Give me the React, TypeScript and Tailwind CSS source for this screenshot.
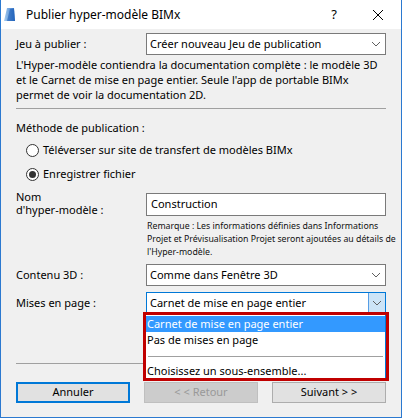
import React from "react";

const F = { fontFamily: '"Noto Sans", "Open Sans", sans-serif' };

function Chevron() {
  return (
    <svg width="10" height="6" viewBox="0 0 10 6" className="block">
      <path d="M1 1 L5 5 L9 1" fill="none" stroke="#606060" strokeWidth="1" />
    </svg>
  );
}

function Select({ text, focused }: { text: string; focused?: boolean }) {
  return (
    <div
      className={`relative flex h-[22px] w-[240px] shrink-0 items-center bg-white border ${
        focused ? "border-[#0078d7]" : "border-[#7a7a7a]"
      }`}
    >
      <span className="pl-[3px] text-[11px] text-black whitespace-nowrap">{text}</span>
      {focused ? (
        <div className="ml-auto flex h-full w-[17px] items-center justify-center border-l border-[#569de5] bg-[#cce4f7]">
          <Chevron />
        </div>
      ) : (
        <div className="ml-auto mr-[4px] flex items-center">
          <Chevron />
        </div>
      )}
    </div>
  );
}

function Radio({ checked, label }: { checked?: boolean; label: string }) {
  return (
    <div className="flex h-[24px] items-center pl-[10px]">
      <div className="flex h-[13px] w-[13px] shrink-0 items-center justify-center rounded-full border border-[#333] bg-white">
        {checked && <div className="h-[7px] w-[7px] rounded-full bg-[#333]" />}
      </div>
      <span className="ml-[4px] whitespace-nowrap text-[11px] text-black">{label}</span>
    </div>
  );
}

export default function App() {
  return (
    <div className="h-[420px] w-[402px] overflow-hidden bg-white" style={F}>
      <div className="relative flex h-[418px] w-[402px] flex-col border-x border-b border-[#2b79d0] bg-[#f0f0f0]">
        {/* Title bar */}
        <div className="flex h-[29px] shrink-0 items-center bg-white">
          <svg width="12" height="15" viewBox="0 0 12 15" className="ml-[3px]">
            <defs>
              <linearGradient id="g" x1="0" y1="0" x2="1" y2="0">
                <stop offset="0" stopColor="#a9cff2" />
                <stop offset="1" stopColor="#2a6cc4" />
              </linearGradient>
            </defs>
            <path d="M3 1 L10 1 L11 14 L0 14 Z" fill="url(#g)" />
            <path d="M6 2 L10 2 L11 14 L3 14 Z" fill="#1e5fb8" opacity="0.6" />
          </svg>
          <span className="ml-[10px] whitespace-nowrap text-[12px] text-black">Publier hyper-modèle BIMx</span>
          <span className="ml-auto mr-[35px] text-[13px] text-black">?</span>
          <svg width="12" height="12" viewBox="0 0 12 12" className="mr-[17px]">
            <path d="M1 1 L11 11 M11 1 L1 11" stroke="#000" strokeWidth="1" />
          </svg>
        </div>

        {/* Content */}
        <div className="flex shrink-0 flex-col px-[15px] text-[11px] text-black">
          <div className="mt-[4px] flex h-[22px] items-center">
            <span className="w-[130px] shrink-0">Jeu à publier :</span>
            <Select text="Créer nouveau Jeu de publication" />
          </div>

          <p className="mt-[2px] whitespace-nowrap leading-[15px]">
            L'Hyper-modèle contiendra la documentation complète : le modèle 3D
            <br />
            et le Carnet de mise en page entier. Seule l'app de portable BIMx
            <br />
            permet de voir la documentation 2D.
          </p>

          <div className="mt-[6px] h-px bg-[#a0a0a0]" />

          <div className="mt-[11px] leading-[15px]">Méthode de publication :</div>

          <div className="mt-[3px]">
            <Radio label="Téléverser sur site de transfert de modèles BIMx" />
            <Radio checked label="Enregistrer fichier" />
          </div>

          <div className="mt-[4px] flex items-start">
            <div className="w-[130px] shrink-0 leading-[13px]">
              Nom
              <br />
              d'hyper-modèle :
            </div>
            <div className="mt-[3px] flex h-[23px] w-[240px] shrink-0 items-center border border-[#7a7a7a] bg-white pl-[4px]">
              Construction
            </div>
          </div>

          <p className="ml-[131px] mt-[4px] whitespace-nowrap text-[8.75px] leading-[13px] text-[#111]">
            Remarque : Les informations définies dans Informations
            <br />
            Projet et Prévisualisation Projet seront ajoutées au détails de
            <br />
            l'Hyper-modèle.
          </p>

          <div className="mt-[5px] flex h-[22px] items-center">
            <span className="w-[130px] shrink-0">Contenu 3D :</span>
            <Select text="Comme dans Fenêtre 3D" />
          </div>

          <div className="mt-[6px] flex h-[22px] items-center">
            <span className="w-[130px] shrink-0">Mises en page :</span>
            <Select text="Carnet de mise en page entier" focused />
          </div>

          <div className="mt-[49px] h-px bg-[#a0a0a0]" />

          <div className="mt-[18px] flex h-[21px] justify-between">
            <button className="flex h-[21px] w-[114px] items-center justify-center border-2 border-[#0078d7] bg-[#e1e1e1] text-[11px] text-black">
              Annuler
            </button>
            <button className="flex h-[21px] w-[114px] items-center justify-center border border-[#bfbfbf] bg-[#cccccc] text-[11px] text-[#999999]">
              &lt; &lt; Retour
            </button>
            <button className="flex h-[21px] w-[114px] items-center justify-center border border-[#adadad] bg-[#e1e1e1] text-[11px] text-black">
              Suivant &gt; &gt;
            </button>
          </div>
        </div>

        {/* Dropdown list overlay with red annotation frame */}
        <div className="absolute left-[142px] top-[312px] h-[69px] w-[246px] border-[3px] border-[#c00000] bg-white">
          <div className="flex h-full flex-col border-r border-[#0078d7] pt-px text-[11px]">
            <div className="flex h-[16px] shrink-0 items-center bg-[#3399ff] pl-[1px] text-white">
              Carnet de mise en page entier
            </div>
            <div className="flex h-[16px] shrink-0 items-center pl-[1px] text-black">Pas de mises en page</div>
            <div className="flex h-[16px] shrink-0 items-center px-[2px]">
              <div className="h-px w-full bg-[#a0a0a0]" />
            </div>
            <div className="flex h-[14px] shrink-0 items-center pl-[1px] text-black">
              Choisissez un sous-ensemble...
            </div>
          </div>
        </div>
      </div>
    </div>
  );
}
